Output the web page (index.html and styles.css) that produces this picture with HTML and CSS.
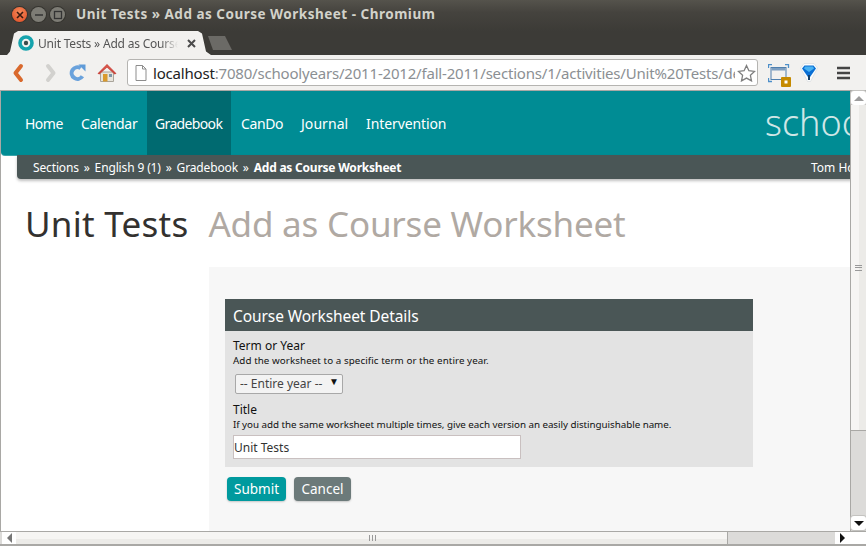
FILE: index.html
```html
<!DOCTYPE html>
<html lang="en">
<head>
<meta charset="utf-8">
<title>Unit Tests » Add as Course Worksheet - Chromium</title>
<link rel="stylesheet" href="styles.css">
</head>
<body>
<div class="window">
  <header class="titlebar">
    <div class="wm-buttons">
      <span class="wm wm-close"><svg width="18" height="18" viewBox="0 0 18 18"><path d="M6 6l6 6M12 6l-6 6" stroke="#3a1a10" stroke-width="1.6"/></svg></span>
      <span class="wm wm-min"><svg width="18" height="18" viewBox="0 0 18 18"><path d="M5 9h8" stroke="#333" stroke-width="1.5"/></svg></span>
      <span class="wm wm-max"><svg width="18" height="18" viewBox="0 0 18 18"><rect x="5.5" y="5.5" width="7" height="7" fill="none" stroke="#333" stroke-width="1.3"/></svg></span>
    </div>
    <div class="window-title">Unit Tests » Add as Course Worksheet - Chromium</div>
  </header>
  <div class="tabstrip">
    <div class="tab">
      <svg class="favicon" width="16" height="16" viewBox="0 0 16 16"><circle cx="8" cy="8" r="6" fill="none" stroke="#16a3ad" stroke-width="3.6"/><circle cx="8" cy="8" r="2.2" fill="#3c4c4c"/></svg>
      <span class="tab-label">Unit Tests » Add as Course Worksheet</span>
      <svg class="tab-close" width="9" height="9" viewBox="0 0 9 9"><path d="M1 1l7 7M8 1L1 8" stroke="#4b4b4b" stroke-width="2"/></svg>
    </div>
    <div class="newtab"></div>
  </div>
  <nav class="toolbar">
    <svg class="tool tool-back" width="14" height="20" viewBox="0 0 14 20"><path d="M10 3L4.500 10l5.500 7" fill="none" stroke="#d9692d" stroke-width="4" stroke-linejoin="round" stroke-linecap="round"/></svg>
    <svg class="tool tool-fwd" width="14" height="20" viewBox="0 0 14 20"><path d="M4 3l5.500 7L4 17" fill="none" stroke="#d2d1ce" stroke-width="4" stroke-linejoin="round" stroke-linecap="round"/></svg>
    <svg class="tool tool-reload" width="17" height="17" viewBox="0 0 18 18"><path d="M14.200 13A6.200 6.200 0 1 1 12.400 4.400" fill="none" stroke="#6aa2dc" stroke-width="4.200"/><path d="M10 .5h7.500V8z" fill="#5f9bd8"/></svg>
    <svg class="tool tool-home" width="20" height="19" viewBox="0 0 20 19"><path d="M3.500 9h13v9.500h-13z" fill="#e7e4dc" stroke="#a9a49a"/><path d="M0.500 10.500L10 1l9.500 9.500-1.800 1L10 4.600 2.300 11.500z" fill="#c9483f"/><path d="M3.500 8L10 1.800 16.500 8 10 4.200z" fill="#d8574c"/><rect x="6" y="11" width="4.500" height="7.500" fill="#d99a2e"/><rect x="12" y="11" width="3" height="3" fill="#7d95a8"/></svg>
    <div class="omnibox">
      <svg class="page-icon" width="12" height="16" viewBox="0 0 12 16"><path d="M1 .5h6.500L11 4v11.500H1z" fill="#fff" stroke="#8d8d8d"/><path d="M7.500 .5V4H11" fill="none" stroke="#8d8d8d"/></svg>
      <div class="url"><b class="url-host">localhost</b>:7080/schoolyears/2011-2012/fall-2011/sections/1/activities/Unit%20Tests/details.html</div>
      <svg class="star" width="19" height="18" viewBox="0 0 19 18"><path d="M9.500 1.500l2.400 5.200 5.600.7-4.100 3.900 1.100 5.600-5-2.800-5 2.800 1.100-5.600L1.500 7.400l5.600-.7z" fill="#fff" stroke="#7f7f7f" stroke-width="1.300"/></svg>
    </div>
    <svg class="tool tool-cast" width="24" height="24" viewBox="0 0 24 24"><path d="M.5 4V.5H4M17 .5h3.500V4M.5 14v3.500H4" fill="none" stroke="#4d8fc9" stroke-width="1.300"/><rect x="3" y="3.500" width="15" height="12" fill="#f2f1ef" stroke="#4f7fae"/><rect x="3.500" y="4" width="14" height="2.500" fill="#7d9ec0"/><rect x="13" y="13" width="10" height="10" rx="1" fill="#c58a00"/><rect x="16.500" y="16.500" width="3" height="3" fill="#fff"/></svg>
    <svg class="tool tool-gem" width="18" height="19" viewBox="0 0 18 19"><path d="M4 .5h10L17.500 5 10.500 18.500h-3L.5 5z" fill="#fbfcfd" stroke="#d4d8dc" stroke-width=".6"/><path d="M4.500 2.500h9L16 5.500 9 15.500 2 5.500z" fill="#0a6fd4"/><path d="M5 3.500h8l1 2L9 9 4 5.500z" fill="#49b2f2"/><path d="M8 12h2v5H8z" fill="#14406a"/></svg>
    <svg class="tool tool-menu" width="13" height="14" viewBox="0 0 13 14"><path d="M0 2h13M0 7h13M0 12h13" stroke="#444" stroke-width="2.400"/></svg>
  </nav>
  <div class="viewport">
    <div class="pane">
      <main class="page">
        <div class="sitenav">
          <ul class="navlinks">
            <li class="navlink nav-home">Home</li>
            <li class="navlink nav-cal">Calendar</li>
            <li class="navlink nav-grade is-active">Gradebook</li>
            <li class="navlink nav-cando">CanDo</li>
            <li class="navlink nav-journal">Journal</li>
            <li class="navlink nav-int">Intervention</li>
          </ul>
          <div class="brand">schooltool</div>
        </div>
        <div class="crumbbar">
          <div class="crumbs"><span>Sections</span><i>»</i><span>English 9 (1)</span><i>»</i><span>Gradebook</span><i>»</i><b class="crumb-current">Add as Course Worksheet</b></div>
          <div class="user">Tom Hoffman</div>
        </div>
        <h1 class="heading"><span class="heading-main">Unit Tests</span><span class="heading-sub">Add as Course Worksheet</span></h1>
        <div class="body-row">
          <div class="content">
            <form class="form">
              <fieldset class="fieldset">
                <legend class="legend">Course Worksheet Details</legend>
                <label class="field-label">Term or Year</label>
                <p class="hint hint-term">Add the worksheet to a specific term or the entire year.</p>
                <div class="select-wrap"><select class="select"><option>-- Entire year --</option></select></div>
                <label class="field-label label-title">Title</label>
                <p class="hint hint-title">If you add the same worksheet multiple times, give each version an easily distinguishable name.</p>
                <input class="input" type="text" value="Unit Tests">
              </fieldset>
              <div class="buttons">
                <button class="btn btn-submit" type="button">Submit</button>
                <button class="btn btn-cancel" type="button">Cancel</button>
              </div>
            </form>
          </div>
        </div>
      </main>
    </div>
    <div class="vscroll">
      <div class="sb-btn sb-up"><span class="arrow arrow-up"></span></div>
      <div class="vthumb"><span class="grip-h"></span></div>
      <div class="vtrack"></div>
      <div class="sb-btn sb-down"><span class="arrow arrow-down"></span></div>
    </div>
  </div>
  <div class="hscroll">
    <div class="hbtn"><span class="arrow arrow-left"></span></div>
    <div class="hthumb"><span class="grip-v"></span></div>
    <div class="htrack"></div>
    <div class="hbtn"><span class="arrow arrow-right"></span></div>
    <div class="corner"></div>
  </div>
</div>
</body>
</html>
```
FILE: styles.css
```css
* { box-sizing: border-box; }
html, body { margin: 0; padding: 0; height: 100%; overflow: hidden; }
body { font-family: "Noto Sans", "Open Sans", sans-serif; background: #fff; }
.window { width: 866px; height: 546px; display: flex; flex-direction: column; background: #a9a8a5; overflow: hidden; }

.titlebar { height: 31px; flex: none; display: flex; align-items: center; padding-bottom: 3px; background: linear-gradient(#55534c, #45433e 40%, #3c3b37); }
.wm-buttons { display: flex; gap: 4px; margin-left: 12px; width: 64px; margin-top: 1px; }
.wm { width: 15px; height: 15px; border-radius: 50%; display: flex; align-items: center; justify-content: center; background: #7d7c75; box-shadow: 0 0 0 1px #35342f; }
.wm svg { flex: none; }
.wm-close { background: radial-gradient(circle at 50% 35%, #f58a5a, #df4a22); }
.window-title { font-size: 13.500px; font-weight: 700; color: #d2d2ca; letter-spacing: .5px; white-space: nowrap; }

.tabstrip { height: 24px; flex: none; display: flex; background: #3c3b37; padding-left: 7px; }
.tab { width: 204px; height: 24px; display: flex; align-items: center; background: #f2f1ef; clip-path: polygon(0 100%, 3px 85%, 7px 10%, 11px 0, 191px 0, 195px 10%, 199px 85%, 204px 100%); }
.favicon { margin-left: 11px; flex: none; }
.tab-label { width: 140px; margin-left: 4px; font-size: 12px; color: #555; white-space: nowrap; overflow: hidden; -webkit-mask-image: linear-gradient(to right, #000 88%, transparent); mask-image: linear-gradient(to right, #000 88%, transparent); letter-spacing: -.2px; }
.tab-close { margin-left: 9px; flex: none; }
.newtab { width: 26px; height: 14px; margin: 5px 0 0 -3px; background: #6b6a66; clip-path: polygon(0 0, 17px 0, 24px 100%, 5px 100%); }

.toolbar { height: 36px; flex: none; display: flex; align-items: center; background: #f2f1ef; border-bottom: 1px solid #a9a8a5; }
.tool { flex: none; }
.tool-back { margin-left: 11px; }
.tool-fwd { margin-left: 19px; }
.tool-reload { margin-left: 11px; }
.tool-home { margin-left: 11px; }
.omnibox { width: 631px; height: 27px; margin-left: 10px; display: flex; align-items: center; background: #fff; border: 1px solid #b5b4b1; border-radius: 3px; padding-left: 7px; }
.page-icon { flex: none; }
.url { width: 582px; margin-left: 6px; font-size: 15px; color: #8b8f93; white-space: nowrap; overflow: hidden; letter-spacing: -.19px; }
.url-host { font-weight: 400; color: #222; }
.star { flex: none; margin-left: 2px; }
.tool-cast { margin-left: 10px; margin-top: 6px; }
.tool-gem { margin-left: 8px; margin-top: -1px; }
.tool-menu { margin-left: 19px; }

.viewport { flex: 1; min-height: 0; display: flex; background: #a9a8a5; padding-left: 1px; }
.pane { width: 849px; overflow: hidden; background: #fff; }
.page { width: 1100px; }

.sitenav { height: 64px; display: flex; background: #008c94; border-radius: 0 0 0 4px; box-shadow: 0 1px 0 #3aa5aa; }
.navlinks { display: flex; gap: 2px; list-style: none; margin: 0; padding: 0 0 0 16px; height: 64px; width: 764px; }
.navlink { padding: 0 8px; display: flex; align-items: center; font-size: 14px; color: #fff; white-space: nowrap; }
.nav-home { width: 54px; letter-spacing: -.5px; }
.nav-cal { width: 72px; letter-spacing: -.35px; }
.nav-grade { width: 84px; letter-spacing: -.65px; }
.nav-cando { width: 58px; letter-spacing: -.4px; }
.nav-journal { width: 63px; letter-spacing: .05px; }
.nav-int { width: 96px; letter-spacing: -.1px; }
.is-active { background: #006a70; }
.brand { font-size: 36px; line-height: 64px; color: #cfe6e6; font-weight: 300; }

.crumbbar { height: 24px; margin-left: 16px; display: flex; align-items: center; background: #4a5656; border-radius: 0 0 0 4px; box-shadow: 0 2px 3px rgba(0,0,0,.25); color: #fff; font-size: 12px; }
.crumbs { width: 794px; padding-left: 16px; display: flex; gap: 4.900px; white-space: nowrap; letter-spacing: -.14px; }
.crumbs i { font-style: normal; }
.crumb-current { letter-spacing: -.22px; }
.user { white-space: nowrap; }

.heading { margin: 0; height: 88px; padding: 23px 0 0 24px; display: flex; gap: 20px; font-size: 35px; font-weight: 400; line-height: 44px; white-space: nowrap; }
.heading-main { color: #33312f; letter-spacing: .25px; }
.heading-sub { color: #b0a9a3; letter-spacing: -.2px; }

.body-row { padding-left: 208px; }
.content { height: 400px; background: #f7f7f7; padding: 32px 0 0 16px; }
.form { width: 528px; }
.fieldset { border: 0; margin: 0; padding: 32px 8px 8px; min-width: 0; position: relative; background: #e3e3e3; }
.legend { position: absolute; left: 0; top: 0; width: 100%; height: 32px; padding: 1px 8px 0; display: flex; align-items: center; background: #4a5656; color: #fff; font-size: 15.500px; letter-spacing: -.08px; }
.field-label { display: block; font-size: 12px; line-height: 16px; color: #111; margin-top: 7px; }
.label-title { margin-top: 11px; }
.hint { margin: 0; font-size: 9.800px; line-height: 14px; color: #111; white-space: nowrap; }
.hint-term { letter-spacing: .07px; }
.hint-title { letter-spacing: -.04px; }
.select-wrap { position: relative; width: 108px; height: 20px; margin: 3px 0 0 2px; }
.select-wrap::after { content: "▼"; position: absolute; right: 4px; top: 3px; font-size: 10px; line-height: 14px; color: #111; pointer-events: none; }
.select { appearance: none; -webkit-appearance: none; width: 108px; height: 20px; padding: 0 0 0 4px; border: 1px solid #a8a8a8; border-radius: 2px; background: #f3f3f3; font-family: inherit; font-size: 12px; color: #444; }
.input { display: block; width: 288px; height: 24px; margin-top: 3px; padding: 0; border: 1px solid #c9c0c0; background: #fff; font-family: inherit; font-size: 12px; color: #333; outline: 0; }
.buttons { display: flex; gap: 8px; margin: 10px 0 0 2px; }
.btn { height: 24px; padding: 0; border: 0; border-radius: 4px; color: #fff; font-family: inherit; font-size: 13.500px; box-shadow: 0 1px 2px rgba(0,0,0,.2); }
.btn-submit { width: 59px; background: #009a9e; }
.btn-cancel { width: 57px; background: #6c7a7a; }

.vscroll { width: 16px; flex: none; display: flex; flex-direction: column; background: #dcdbd9; border-left: 1px solid #a9a8a5; }
.sb-btn { height: 17px; flex: none; display: flex; align-items: center; justify-content: center; background: #fff; border-radius: 3px; box-shadow: 0 0 0 1px #c4c3c0; }
.sb-up { height: 14px; }
.sb-down { height: 14px; margin-bottom: 1px; }
.vthumb { height: 326px; flex: none; display: flex; align-items: center; justify-content: center; background: linear-gradient(to right, #f6f5f3 55%, #ecebe8 55%); border-bottom: 1px solid #a9a8a5; }
.vtrack { flex: 1; }
.grip-h { width: 7px; height: 6px; border-top: 1px solid #999; border-bottom: 1px solid #999; position: relative; }
.grip-h::after { content: ""; position: absolute; left: 0; right: 0; top: 1px; height: 1px; background: #999; }
.arrow { width: 0; height: 0; border: 5px solid transparent; }
.arrow-up { border-top: 0; border-bottom-color: #9c9c9c; }
.arrow-down { border-bottom: 0; border-top-color: #111; }
.arrow-left { border-left: 0; border-right-color: #777; }
.arrow-right { border-right: 0; border-left-color: #111; }

.hscroll { height: 15px; flex: none; display: flex; background: #dcdbd9; border-top: 1px solid #a9a8a5; border-bottom: 2px solid #a9a8a5; padding-left: 2px; }
.hbtn { width: 14px; flex: none; display: flex; align-items: center; justify-content: center; background: #fff; }
.hthumb { width: 712px; flex: none; display: flex; align-items: center; justify-content: center; padding-left: 2px; background: linear-gradient(#f6f5f3 55%, #ecebe8 55%); border-right: 1px solid #a9a8a5; }
.htrack { flex: 1; }
.corner { width: 17px; flex: none; background: #fff; }
.grip-v { width: 7px; height: 6px; border-left: 1px solid #999; border-right: 1px solid #999; position: relative; }
.grip-v::after { content: ""; position: absolute; top: 0; bottom: 0; left: 2px; width: 1px; background: #999; }
```
